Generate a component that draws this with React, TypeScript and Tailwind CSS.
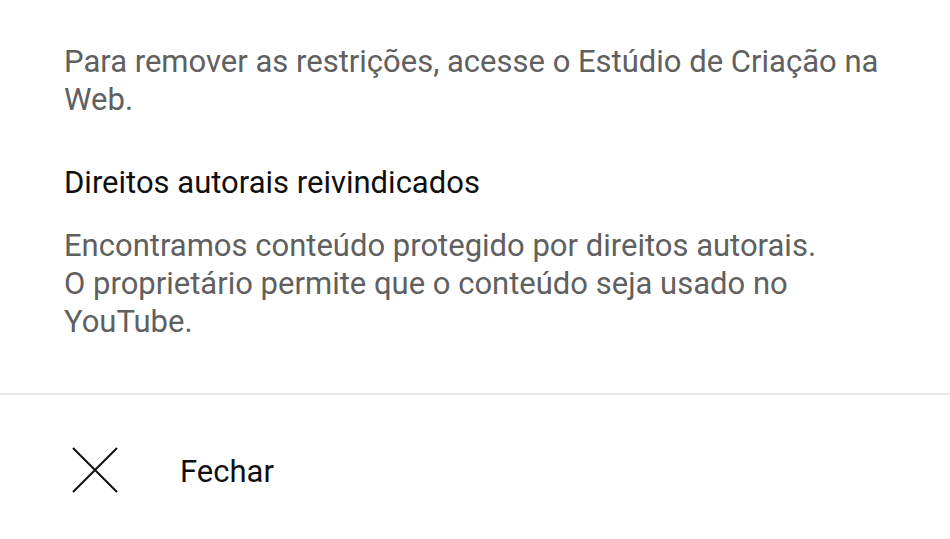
import React from 'react';

const App: React.FC = () => {
  return (
    <div className="w-[950px] h-[539px] bg-white overflow-hidden font-['Roboto','Noto_Sans',sans-serif]">
      <div className="px-16 pt-[43px]">
        <p className="text-[31px] leading-[38px] text-[#606060]">
          Para remover as restrições, acesse o Estúdio de Criação na Web.
        </p>
        <h3 className="mt-[45px] text-[31px] leading-[38px] text-[#0f0f0f]">
          Direitos autorais reivindicados
        </h3>
        <p className="mt-[25px] text-[31px] leading-[38px] text-[#606060]">
          Encontramos conteúdo protegido por direitos autorais.
          <br />
          O proprietário permite que o conteúdo seja usado no YouTube.
        </p>
      </div>
      <div className="mt-[52px] h-[2px] bg-[#e5e5e5]" />
      <button className="flex h-[150px] w-full items-center text-left">
        <svg className="ml-[72px] h-[46px] w-[46px]" viewBox="0 0 46 46" fill="none" stroke="#0f0f0f" strokeWidth="2">
          <path d="M1 1L45 45M45 1L1 45" />
        </svg>
        <span className="ml-[62px] mt-[5px] text-[31px] text-[#0f0f0f]">Fechar</span>
      </button>
    </div>
  );
};

export default App;
